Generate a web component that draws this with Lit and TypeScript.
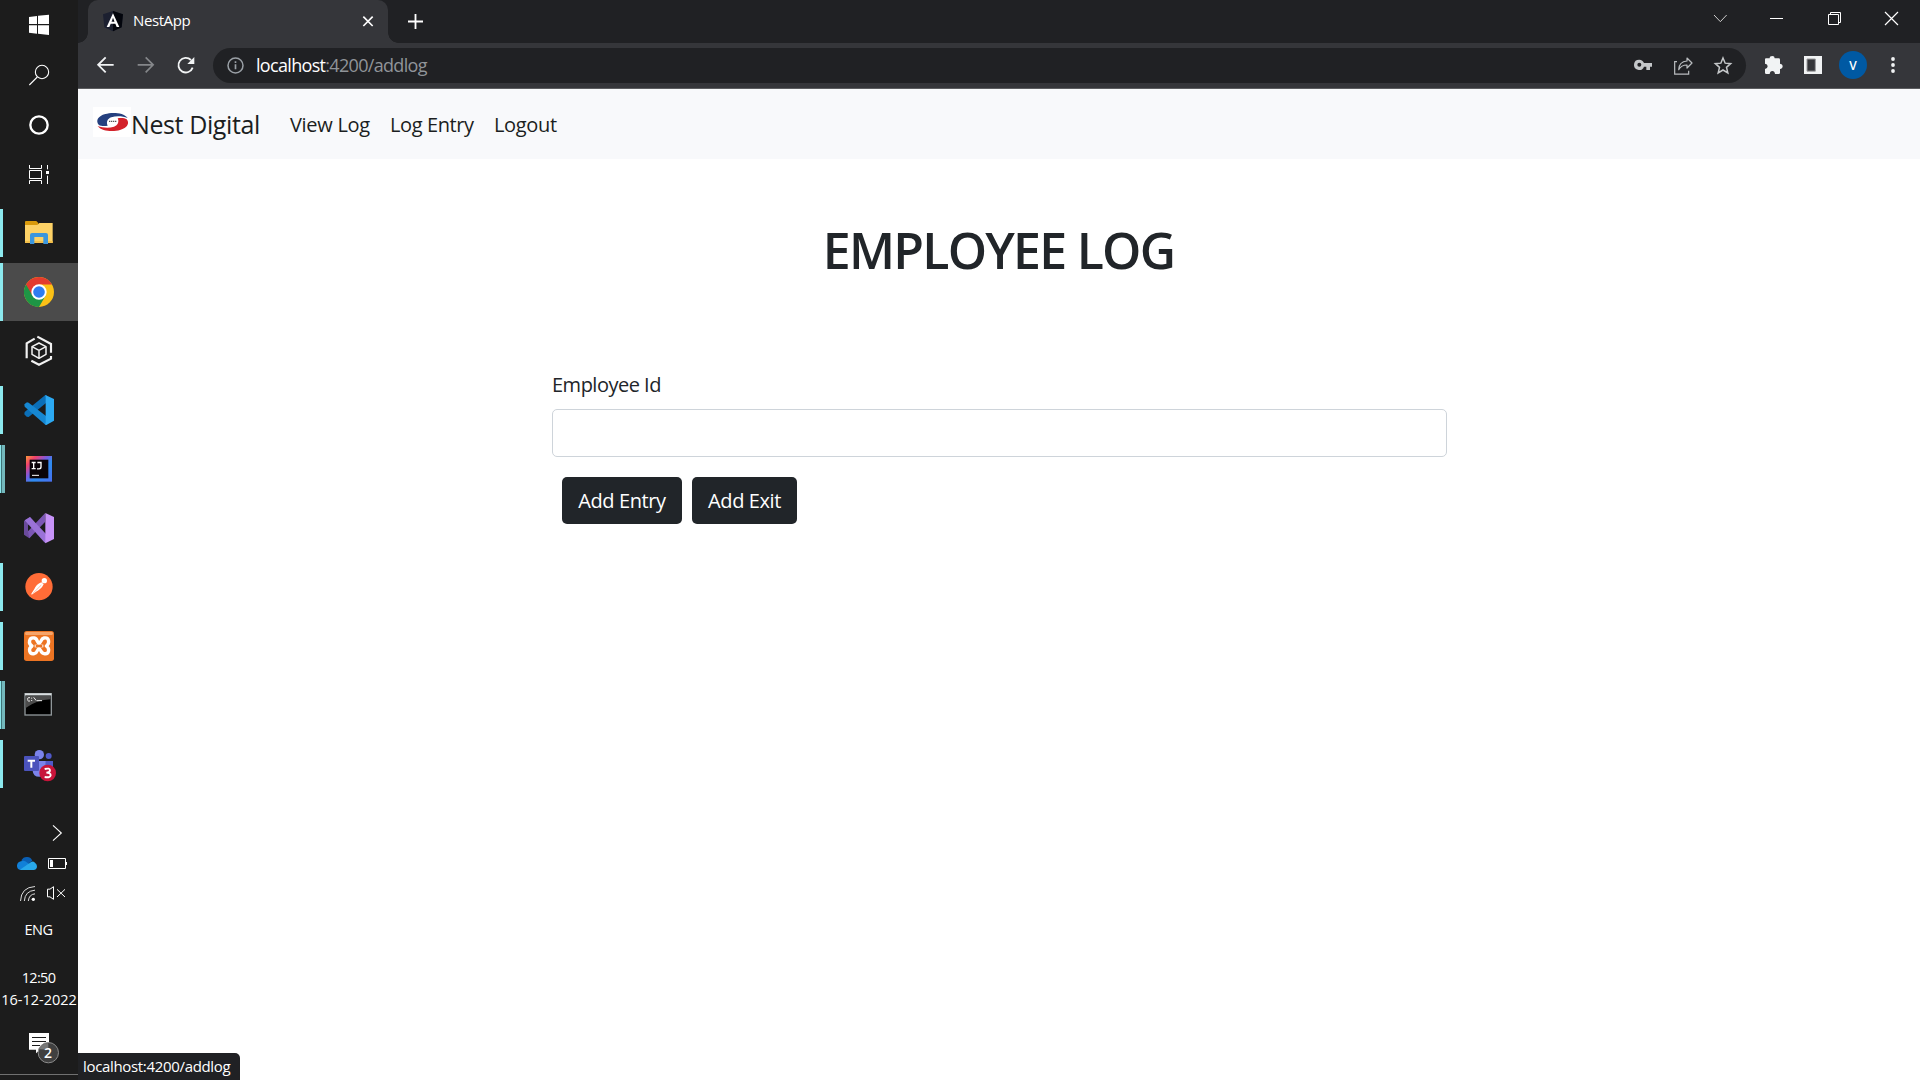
import { LitElement, html, css, svg } from "lit";
import { customElement } from "lit/decorators.js";

const icon = (x: number, y: number, w: number, h: number, body: unknown) =>
  html`<svg width=${w} height=${h} viewBox="${x} ${y} ${w * 3} ${h * 3}" fill="none">${body}</svg>`;

const windowsLogo = icon(84, 42, 22, 22, svg`<path fill="#fff" d="M87 51L111 48V72H87ZM114 47.500L147 44V72H114ZM87 76H111V101L87 98ZM114 76H147V105L114 101.500Z"/>`);
const searchIcon = icon(84, 192, 22, 22, svg`<g stroke="#fff" stroke-width="3.200"><circle cx="126" cy="216" r="20"/><path d="M112 231L88 255"/></g>`);
const cortanaIcon = icon(84, 342, 22, 22, svg`<circle cx="117" cy="375" r="26" stroke="#fff" stroke-width="7"/>`);
const taskViewIcon = icon(84, 492, 22, 20, svg`<g stroke="#fff" stroke-width="3"><path d="M88.500 495V505.500H124.500V495M88.500 552V541.500H124.500V552M88.500 511.500H124.500V535.500H88.500ZM142.500 495V508M142.500 527V552"/></g><path fill="#fff" d="M138 513H147V522H138Z"/>`);

const folderIcon = icon(72, 51, 34, 34, svg`
  <path fill="#d99a0b" d="M75 66q0-3 3-3h31l6 6v9H75z"/>
  <path fill="#fdd266" d="M75 75h37l6-6h40v60H75z"/>
  <path fill="#f3bf4a" d="M75 123h83v6H75z"/>
  <path fill="#3b96dd" d="M90 132v-27q0-6 6-6h42q6 0 6 6v27h-14v-21h-27v21z"/>`);
const chromeIcon = icon(72, 228, 34, 34, svg`
  <circle cx="117" cy="276" r="45" fill="#fbc116"/>
  <path fill="#1e9545" d="M117 276L78 253.500A45 45 0 0 0 117 321L136.500 287Z"/>
  <path fill="#e33b2e" d="M117 253.500H156A45 45 0 0 0 78 253.500L97.500 287.300Z"/>
  <circle cx="117" cy="276" r="23" fill="#fff"/><circle cx="117" cy="276" r="17.500" fill="#2f7cf0"/>`);
const cubeIcon = icon(72, 405, 34, 34, svg`<g stroke="#f2f2f2" stroke-width="6.500">
  <path d="M80 475V430L104 416"/><path d="M112 410L153 432V458"/><path d="M153 468V476L117 494L94 482"/></g>
  <g stroke="#f2f2f2" stroke-width="4.500" stroke-linejoin="round"><path d="M117 429L138 440V463L117 475L96 463V440Z"/><path d="M96 440L117 451L138 440M117 451V475"/></g>`);
const vscodeIcon = icon(72, -18, 34, 34, svg`
  <path fill="#0b6fb8" d="M73 43L80 50L86 51L141 7V-13L136 -15L74 36Z"/>
  <path fill="#1687d2" d="M73 13L81 7L86 8L141 50V71L136 74L74 20Z"/>
  <path fill="#2ca9f2" d="M136 -15L162 -3V62L139 75Q134 75 137 68V-8Z"/>`);
const intellijIcon = icon(72, 159, 34, 34, svg`
  <defs><linearGradient id="ij" x1="0" y1="0" x2="1" y2="1"><stop offset="0" stop-color="#fc9a3a"/><stop offset=".2" stop-color="#f2416b"/><stop offset=".42" stop-color="#7a5be0"/><stop offset=".6" stop-color="#2d8df0"/><stop offset="1" stop-color="#4a6ff0"/></linearGradient></defs>
  <path fill="url(#ij)" d="M78 168h78v77H78z"/><path fill="#0a0408" d="M89 179h56v56H89z"/>
  <path stroke="#fff" stroke-width="4" d="M95 187.500h12M101 187v19M95 206h12M112 187.500h11V201q0 5.500-6 5.500h-6"/><path stroke="#fff" stroke-width="3" d="M96 226h21"/>`);
const visualStudioIcon = icon(72, 336, 34, 34, svg`
  <path fill="#6a4a9c" d="M72 363L90 351L100 362L84 376V392L100 398L88 415L72 404Z"/>
  <path fill="#7c57b5" d="M84 394L135 340V366L88 415Z"/>
  <path fill="#9a72d8" d="M74 361L90 351L138 402V429L133 427Z"/>
  <path fill="#c793f8" d="M136 339L162 351V417L136 430Z"/>`);
const postmanIcon = icon(72, 513, 34, 34, svg`
  <circle cx="117" cy="560" r="41" fill="#ff6c37"/>
  <path fill="#fff" d="M124 547L131 553Q124 568 108 575L95 584L94 581L103 567Q108 554 124 547Z"/><circle cx="133" cy="542" r="8" fill="#fff"/>
  <path stroke="#ff9c77" stroke-width="2" d="M98 581L124 555"/>`);
const xamppIcon = icon(72, 90, 34, 34, svg`
  <rect x="72" y="93" width="90" height="90" rx="8" fill="#ec7423"/><path fill="#f6a56b" d="M80 96h74q5 0 5 4l-2 5H77l-2-5q0-4 5-4z"/>
  <path stroke="#fff" stroke-width="10" stroke-linejoin="round" d="M103 114C86 111 84 131 96 138C84 146 87 164 103 161C114 159 110 147 117 147C124 147 120 159 132 161C148 164 150 146 139 138C150 130 148 111 132 114C121 116 125 129 117 129C110 129 114 116 103 114Z"/>
  <path stroke="#fff" stroke-width="8" d="M104 138h26"/><path stroke="#ec7423" stroke-width="6" d="M107 138h20"/>`);
const terminalIcon = icon(72, 267, 34, 34, svg`
  <path fill="#8f9699" d="M73 279h83v68H73z"/><path fill="#d9dee0" d="M75 280h79v6H75z"/><path fill="#000" d="M77 287h75v56H77z"/>
  <path fill="#4c4c4c" d="M77 287h75v11Q110 300 77 324z"/>
  <path stroke="#eee" stroke-width="3" d="M90 293h-5q-2 0-2 5t2 5h5M95 293v3M95 300v3M101 292l8 10M111 302h15"/>`);
const teamsIcon = icon(72, 444, 34, 34, svg`
  <circle cx="118" cy="464" r="14" fill="#7b83eb"/><circle cx="146" cy="468" r="9" fill="#5059c9"/>
  <path fill="#5059c9" d="M135 483h24v20q0 18-20 18z"/><path fill="#7b83eb" d="M98 483h39v27q0 20-19 20t-20-18z"/>
  <rect x="72" y="468" width="45" height="45" rx="3" fill="#4b53bc"/><path stroke="#fff" stroke-width="6" d="M83 482h22M94 481v22"/>
  <circle cx="143" cy="519" r="25" fill="#c8143a"/>
  <path stroke="#fff" stroke-width="5.500" d="M134 507Q150 503 150 511Q150 518 139 518Q152 518 152 526Q151 534 134 531"/>`);

const expandIcon = icon(156, 72, 11, 18, svg`<path stroke="#fff" stroke-width="3.300" d="M159 76L184 99L159 122"/>`);
const cloudIcon = icon(48, 165, 22, 15, svg`
  <path fill="#0a5fb4" d="M64 178Q70 167 82 168Q93 169 97 179L80 192Z"/><path fill="#1180d8" d="M62 207Q50 205 51 193Q53 181 66 180Q74 178 82 185L100 196L75 207Z"/>
  <path fill="#28a8ea" d="M60 206L92 184Q98 178 105 185Q112 190 111 198Q109 207 101 207H64Z"/>`);
const batteryIcon = icon(141, 171, 21, 13, svg`<path stroke="#fff" stroke-width="3" d="M145.500 175.500H196.500V205.500H145.500Z"/><path fill="#fff" d="M150 180h9v21h-9zM198 186h3v9h-3z"/>`);
const wifiIcon = icon(57, 255, 18, 17, svg`<g stroke="#e8e8e8" stroke-width="2.800"><path d="M61.500 303Q63 262 105 259.500"/><path d="M73 303Q75 273 105 270.500"/><path d="M85 303Q87 283 105 281.500"/></g><circle cx="100" cy="298" r="5" fill="#fff"/>`);
const mutedIcon = icon(138, 255, 20, 16, svg`<path stroke="#fff" stroke-width="3" d="M142.500 267.500H150L160.500 260V298L150 290.500H142.500ZM171 268L195 291M195 268L171 291"/>`);
const notifyIcon = icon(84, 699, 32, 32, svg`
  <path fill="#fff" d="M87 702H147V752H120L108 763V752H87Z"/><path stroke="#1c1c1c" stroke-width="3" d="M96 715.500H138M96 727.500H138M96 739.500H120"/>
  <circle cx="145" cy="761" r="30.500" fill="#404040" stroke="#8c8c8c" stroke-width="3"/>
  <path fill="#777" d="M117 751Q125 733 145 732V752Z"/>`);

const angularIcon = icon(81, 30, 20, 22, svg`<path fill="#1c2030" d="M111 33L141 43L137 82L111 94L85 82L81 43Z"/><path fill="#03050c" d="M111 33L141 43L137 82L111 94Z"/>
  <path fill="#fff" fill-rule="evenodd" d="M111 40L130 81H122L118 71H104L100 81H92ZM111 53L106.500 65H115.500Z"/>`);
const tabClose = icon(858, 45, 12, 12, svg`<path stroke="#fff" stroke-width="5" d="M862 50L890 78M890 50L862 78"/>`);
const newTab = icon(993, 39, 17, 17, svg`<path stroke="#fff" stroke-width="5.500" d="M996 64.500H1041M1018.500 42V87"/>`);
const backIcon = icon(60, 168, 18, 19, svg`<path stroke="#f1f3f4" stroke-width="5.500" d="M113 194.500H68M89 172L66.500 194.500L89 217"/>`);
const forwardIcon = icon(183, 168, 18, 19, svg`<path stroke="#85878a" stroke-width="5" d="M185 194.500H230M209 172L231.500 194.500L209 217"/>`);
const reloadIcon = icon(301, 168, 20, 19, svg`<path stroke="#f1f3f4" stroke-width="5.500" d="M351 203A22 22 0 1 1 346 180"/><path fill="#f1f3f4" d="M356 171V192H335Z"/>`);
const infoIcon = icon(453, 171, 17, 17, svg`<circle cx="478.500" cy="196.500" r="22.500" stroke="#9aa0a6" stroke-width="4.500"/><path stroke="#9aa0a6" stroke-width="5" d="M478.500 193V208M478.500 184V189"/>`);
const keyIcon = icon(99, 177, 20, 13, svg`<path fill="#c4c7c9" fill-rule="evenodd" d="M118 179A15.500 15.500 0 1 0 132 200H139V210H150V200H156V189H132A15.500 15.500 0 0 0 118 179ZM118 188.500A6 6 0 1 1 118 200.500A6 6 0 1 1 118 188.500Z"/>`);
const shareIcon = icon(219, 168, 21, 19, svg`<path stroke="#b9bcbf" stroke-width="3.600" d="M231 185H224V222.500H266V212"/><path stroke="#b9bcbf" stroke-width="3.600" stroke-linejoin="round" d="M261 174L276 189L261 204V195Q244 195 236 209Q237 185 261 183Z"/>`);
const starIcon = icon(339, 168, 20, 19, svg`<path stroke="#c4c7c9" stroke-width="4.500" d="M369 174L375.500 189.500L392 191L379.500 202L383.500 219L369 210L354.500 219L358.500 202L346 191L362.500 189.500Z"/>`);
const puzzleIcon = icon(492, 165, 20, 21, svg`<path fill="#f1f3f4" d="M495 178Q495 175 498 175H509Q509 168 517 168Q524 168 524 175H536Q540 175 540 179V191Q548 192 548 198Q548 206 540 207V218Q540 222 536 222H525Q524 213 517 213Q510 213 509 222H499Q495 222 495 218V207Q503 206 503 199Q503 192 495 191Z"/>`);
const panelIcon = icon(609, 165, 20, 21, svg`<path fill="#f1f3f4" d="M612 168H666V222H612Z"/><path fill="#35363a" stroke="#9b9c9e" stroke-width="3" d="M621 177H646V213.500H621Z"/>`);
const menuIcon = icon(870, 168, 6, 19, svg`<g fill="#f1f3f4"><circle cx="879" cy="177" r="5.700"/><circle cx="879" cy="195" r="5.700"/><circle cx="879" cy="213" r="5.700"/></g>`);
const winChevron = icon(339, 42, 15, 9, svg`<path stroke="#cfcfcf" stroke-width="3" d="M342 45L361 65L380 45"/>`);
const winMin = icon(507, 51, 15, 3, svg`<path fill="#fff" d="M510 54H549V57H510Z"/>`);
const winRestore = icon(681, 33, 15, 15, svg`<path stroke="#fff" stroke-width="3" d="M685.500 43.500H715.500V73.500H685.500ZM691.500 43V37.500H721.500V67.500H716"/>`);
const winClose = icon(852, 33, 15, 15, svg`<path stroke="#fff" stroke-width="3.600" d="M855 36L894 75M894 36L855 75"/>`);

const nestLogo = icon(51, 321, 38, 30, svg`<path fill="#fff" d="M51 321h114v90H51z"/>
  <path fill="#25407f" d="M155 354C142 336 105 337 88 342C66 348 58 362 68 374C75 379 86 379 95 377C90 367 94 356 106 352C122 347 141 349 155 354Z"/>
  <path fill="#d3222a" transform="rotate(180 110 366)" d="M155 354C142 336 105 337 88 342C66 348 58 362 68 374C75 379 86 379 95 377C90 367 94 356 106 352C122 347 141 349 155 354Z"/>
  <path stroke="#fff" stroke-width="9" d="M97 364H123"/><path stroke="#555" stroke-width="4" stroke-dasharray="4 2" d="M99 364H122"/>`);

@customElement("win-taskbar")
class WinTaskbar extends LitElement {
  static styles = css`
    :host { display: flex; flex-direction: column; height: 1080px; box-sizing: border-box; background: #1c1c1c; color: #fff; font-family: "Open Sans", "Noto Sans", sans-serif; font-size: 14.5px; }
    svg { display: block; }
    .sys { height: 50px; display: grid; place-items: center; }
    .sys:nth-child(4) { height: 53px; box-sizing: border-box; padding-bottom: 5px; }
    .app { height: 59px; position: relative; box-sizing: border-box; padding: 14px 0 0 24px; }
    .active { background: linear-gradient(#1c1c1c 1px, #4b4b4b 1px); }
    .app::before { content: ""; position: absolute; left: 0; top: 6px; height: 48px; width: 0; background: #8ce9ee; }
    .on::before { width: 3px; }
    .active::before { top: 1px; height: 58px; }
    .multi::before { width: 5px; background: linear-gradient(90deg, #8ce9ee 1px, #3e7478 1px 2px, #73b8bc 2px); }
    .expand { margin: 31px 0 0 52px; }
    .row1 { display: flex; gap: 9px; margin: 14px 0 0 16px; align-items: center; }
    .row2 { display: flex; gap: 9px; margin: 14px 0 0 19px; }
    .label { text-align: center; white-space: nowrap; line-height: 22px; }
    .lang { margin-top: 17px; letter-spacing: -0.5px; padding-right: 1px; }
    .time { margin-top: 26px; letter-spacing: -0.65px; padding-right: 1px; }
    .date { letter-spacing: 0; }
    .notify { margin: 20px 0 0 28px; position: relative; width: 32px; }
    .notify svg { transform: translateY(1px); }
    .count { position: absolute; left: 10px; top: 11px; width: 20px; line-height: 22px; text-align: center; font-size: 14px; font-weight: 600; }
    .peek { height: 1px; background: #707070; margin-top: auto; margin-bottom: 5px; }
  `;
  render() {
    const apps: [unknown, string][] = [
      [folderIcon, "on"], [chromeIcon, "on active"], [cubeIcon, ""], [vscodeIcon, "on"], [intellijIcon, "multi"],
      [visualStudioIcon, ""], [postmanIcon, "on"], [xamppIcon, "on"], [terminalIcon, "multi"], [teamsIcon, "on"],
    ];
    return html`
      ${[windowsLogo, searchIcon, cortanaIcon, taskViewIcon].map((i) => html`<div class="sys">${i}</div>`)}
      ${apps.map(([i, c]) => html`<div class="app ${c}">${i}</div>`)}
      <div class="expand">${expandIcon}</div>
      <div class="row1">${cloudIcon}${batteryIcon}</div>
      <div class="row2">${wifiIcon}${mutedIcon}</div>
      <div class="label lang">ENG</div>
      <div class="label time">12:50</div>
      <div class="label date">16-12-2022</div>
      <div class="notify">${notifyIcon}<span class="count">2</span></div>
      <div class="peek"></div>`;
  }
}

@customElement("browser-chrome")
class BrowserChrome extends LitElement {
  static styles = css`
    :host { display: block; height: 89px; box-sizing: border-box; border-bottom: 1px solid #5c5d60; background: #35363a; color: #fff; font-family: "Open Sans", "Noto Sans", sans-serif; }
    svg { display: block; flex: none; }
    .strip { height: 43px; display: flex; background: #202124; align-items: flex-start; padding-left: 10px; }
    .tab { width: 300px; height: 43px; box-sizing: border-box; background: #35363a; border-radius: 10px 10px 0 0; display: flex; align-items: center; padding: 0 14px 1px 15px; position: relative; }
    .tab::before, .tab::after { content: ""; position: absolute; bottom: 0; width: 10px; height: 10px; }
    .tab::before { left: -10px; background: radial-gradient(circle at 0 0, transparent 9.500px, #35363a 10px); }
    .tab::after { right: -10px; background: radial-gradient(circle at 100% 0, transparent 9.500px, #35363a 10px); }
    .name { font-size: 15px; margin-left: 10px; padding-bottom: 2px; flex: 1; letter-spacing: -0.4px; }
    .plus { margin: 13px 0 0 19px; }
    .win { margin-left: auto; display: flex; align-items: center; height: 37px; gap: 42px; padding-right: 21px; }
    .win svg:nth-child(3) { margin-left: 1px; }
    .win svg:first-child { margin-right: -1px; }
    .bar { height: 45px; display: flex; align-items: center; box-sizing: border-box; padding: 0 20px 0 18px; }
    .fwd { margin-left: 23px; }
    .reload { margin-left: 21px; }
    .omni { margin-left: 17px; flex: none; width: 1533px; height: 35px; border-radius: 18px; background: #202124; display: flex; align-items: center; box-sizing: border-box; padding: 0 13px 0 14px; }
    .url { font-size: 18px; margin-left: 12px; flex: 1; letter-spacing: -0.68px; color: #909499; line-height: 35px; }
    .host { color: #fff; }
    .page { display: flex; align-items: center; gap: 19px; }
    .page svg:first-child { margin-right: 1px; }
    .ext { margin-left: 18px; display: flex; align-items: center; gap: 19px; }
    .ext svg:last-child { margin-left: 4px; }
    .avatar { width: 28px; height: 28px; border-radius: 50%; background: #0059a3; display: grid; place-items: center; font-size: 12px; font-weight: 600; margin: -1px 0 0 -3px; }
  `;
  render() {
    return html`
      <div class="strip">
        <div class="tab">${angularIcon}<span class="name">NestApp</span>${tabClose}</div>
        <div class="plus">${newTab}</div>
        <div class="win">${winChevron}${winMin}${winRestore}${winClose}</div>
      </div>
      <div class="bar">
        ${backIcon}<div class="fwd">${forwardIcon}</div><div class="reload">${reloadIcon}</div>
        <div class="omni">${infoIcon}<span class="url"><span class="host">localhost</span>:4200/addlog</span>
          <div class="page">${keyIcon}${shareIcon}${starIcon}</div></div>
        <div class="ext">${puzzleIcon}${panelIcon}<span class="avatar">V</span>${menuIcon}</div>
      </div>`;
  }
}

@customElement("app-root")
class AppRoot extends LitElement {
  static styles = css`
    :host { display: grid; grid-template-columns: 78px 1842px; width: 1920px; height: 1080px; overflow: hidden; background: #fff; color: #212529; font-family: "Open Sans", "Noto Sans", sans-serif; font-size: 20px; position: relative; }
    .nav { height: 70px; background: #f8f9fb; display: flex; align-items: center; padding-left: 15px; box-sizing: border-box; white-space: nowrap; color: #1b1e21; }
    .nav svg { display: block; margin-top: -4px; }
    .brand { font-size: 25px; width: 159px; letter-spacing: -0.4px; }
    .link { letter-spacing: -0.35px; padding-top: 1px; }
    .view { width: 100px; letter-spacing: -0.3px; }
    .entries { width: 104px; letter-spacing: -0.4px; }
    .title { margin: 45px 0 0; padding-right: 1px; text-align: center; font-size: 50px; line-height: 92px; font-weight: 600; letter-spacing: -1.75px; }
    .form { width: 895px; margin: 71px 0 0 474px; }
    label { display: block; line-height: 36px; letter-spacing: -0.5px; }
    input { display: block; width: 895px; height: 48px; box-sizing: border-box; border: 1px solid #ced4da; border-radius: 5px; margin-top: 6px; background: #fff; padding: 8px 15px; font: inherit; outline: none; }
    .actions { display: flex; gap: 10px; padding: 20px 0 0 10px; }
    button { height: 47px; border: 0; border-radius: 5px; background: #212529; color: #fff; font: inherit; padding: 0; white-space: nowrap; letter-spacing: -0.4px; }
    .entry { width: 120px; }
    .exit { width: 105px; }
    .status { position: absolute; left: 78px; bottom: 0; height: 27px; width: 162px; box-sizing: border-box; padding-left: 5px; line-height: 27px; background: #202124; color: #fff; font-size: 15px; letter-spacing: -0.33px; border-radius: 0 5px 0 0; white-space: nowrap; }
  `;
  render() {
    return html`
      <win-taskbar></win-taskbar>
      <div class="content">
        <browser-chrome></browser-chrome>
        <nav class="nav">${nestLogo}<span class="brand">Nest Digital</span>
          <span class="link view">View Log</span><span class="link entries">Log Entry</span><span class="link">Logout</span></nav>
        <h1 class="title">EMPLOYEE LOG</h1>
        <div class="form">
          <label for="emp">Employee Id</label>
          <input id="emp" type="text" />
          <div class="actions"><button class="entry">Add Entry</button><button class="exit">Add Exit</button></div>
        </div>
      </div>
      <div class="status">localhost:4200/addlog</div>`;
  }
}
